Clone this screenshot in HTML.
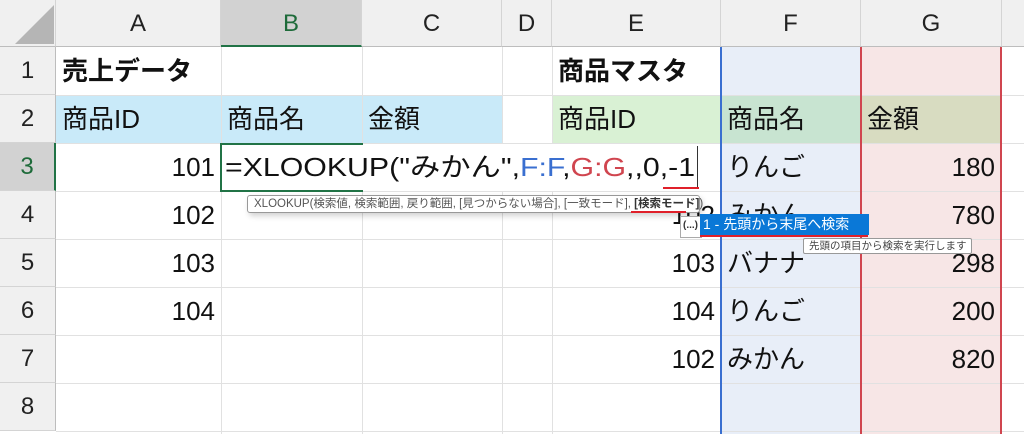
<!DOCTYPE html>
<html><head><meta charset="utf-8"><style>
*{margin:0;padding:0;box-sizing:border-box}
body{width:1024px;height:434px;overflow:hidden;background:#fff;font-family:"Liberation Sans","Noto Sans CJK JP",sans-serif;color:#111;position:relative}
.a{position:absolute}
.hl{position:absolute;height:1px;background:#e1e1e1}
.vl{position:absolute;width:1px;background:#e1e1e1}
.ch{position:absolute;top:0;height:47px;background:#f0f0f0;border-right:1px solid #d4d4d4;border-bottom:1px solid #bdbdbd;font-size:24px;text-align:center;line-height:47px;color:#222}
.rh{position:absolute;left:0;width:56px;height:48px;background:#f0f0f0;border-right:1px solid #bdbdbd;border-bottom:1px solid #d4d4d4;font-size:24px;text-align:center;line-height:48px;color:#222}
.t{position:absolute;font-size:26px;line-height:48px;white-space:nowrap}
.r{text-align:right}
</style></head><body>
<div class="a" style="left:56px;top:95px;width:446px;height:48px;background:#c9eaf9"></div>
<div class="a" style="left:721px;top:47px;width:140px;height:387px;background:#e8eef8"></div>
<div class="a" style="left:861px;top:47px;width:141px;height:387px;background:#f7e6e6"></div>
<div class="a" style="left:552px;top:95px;width:169px;height:48px;background:#d9f1d4"></div>
<div class="a" style="left:721px;top:95px;width:140px;height:48px;background:#c8e4d1"></div>
<div class="a" style="left:861px;top:95px;width:141px;height:48px;background:#d8dcc1"></div>
<div class="hl" style="left:56px;top:95px;width:968px"></div>
<div class="hl" style="left:56px;top:143px;width:968px"></div>
<div class="hl" style="left:56px;top:191px;width:968px"></div>
<div class="hl" style="left:56px;top:239px;width:968px"></div>
<div class="hl" style="left:56px;top:287px;width:968px"></div>
<div class="hl" style="left:56px;top:335px;width:968px"></div>
<div class="hl" style="left:56px;top:383px;width:968px"></div>
<div class="hl" style="left:56px;top:431px;width:968px"></div>
<div class="vl" style="left:221px;top:47px;height:387px"></div>
<div class="vl" style="left:362px;top:47px;height:387px"></div>
<div class="vl" style="left:502px;top:47px;height:387px"></div>
<div class="vl" style="left:552px;top:47px;height:387px"></div>
<div class="ch" style="left:0;width:56px"></div>
<svg class="a" style="left:12px;top:3px" width="44" height="42"><polygon points="42,2 42,41 3,41" fill="#b5b5b5"/></svg>
<div class="ch" style="left:56px;width:165px">A</div>
<div class="ch" style="left:221px;width:141px;background:#d2d2d2;color:#1e6b3a;border-bottom:2px solid #217346">B</div>
<div class="ch" style="left:362px;width:140px">C</div>
<div class="ch" style="left:502px;width:50px">D</div>
<div class="ch" style="left:552px;width:169px">E</div>
<div class="ch" style="left:721px;width:140px">F</div>
<div class="ch" style="left:861px;width:141px">G</div>
<div class="ch" style="left:1002px;width:30px"></div>
<div class="rh" style="top:47px">1</div>
<div class="rh" style="top:95px">2</div>
<div class="rh" style="top:143px;background:#d2d2d2;color:#1e6b3a;border-right:2px solid #217346">3</div>
<div class="rh" style="top:191px">4</div>
<div class="rh" style="top:239px">5</div>
<div class="rh" style="top:287px">6</div>
<div class="rh" style="top:335px">7</div>
<div class="rh" style="top:383px">8</div>
<div class="a" style="left:720px;top:47px;width:2px;height:387px;background:#3a6fd0"></div>
<div class="a" style="left:860px;top:47px;width:2px;height:387px;background:#d0454f"></div>
<div class="a" style="left:1000px;top:47px;width:2px;height:387px;background:#d0454f"></div>
<div class="t" style="left:62px;top:47px;font-weight:bold">売上データ</div>
<div class="t" style="left:558px;top:47px;font-weight:bold">商品マスタ</div>
<div class="t" style="left:62px;top:95px">商品ID</div>
<div class="t" style="left:227px;top:95px">商品名</div>
<div class="t" style="left:368px;top:95px">金額</div>
<div class="t" style="left:558px;top:95px">商品ID</div>
<div class="t" style="left:727px;top:95px">商品名</div>
<div class="t" style="left:867px;top:95px">金額</div>
<div class="t r" style="left:56px;width:159px;top:143px">101</div>
<div class="t r" style="left:56px;width:159px;top:191px">102</div>
<div class="t r" style="left:56px;width:159px;top:239px">103</div>
<div class="t r" style="left:56px;width:159px;top:287px">104</div>
<div class="t r" style="left:552px;width:163px;top:239px">103</div>
<div class="t r" style="left:552px;width:163px;top:287px">104</div>
<div class="t r" style="left:552px;width:163px;top:335px">102</div>
<div class="t r" style="left:552px;width:163px;top:191px">102</div>
<div class="t" style="left:727px;top:143px">りんご</div>
<div class="t" style="left:727px;top:191px">みかん</div>
<div class="t" style="left:727px;top:239px">バナナ</div>
<div class="t" style="left:727px;top:287px">りんご</div>
<div class="t" style="left:727px;top:335px">みかん</div>
<div class="t r" style="left:861px;width:134px;top:143px">180</div>
<div class="t r" style="left:861px;width:134px;top:191px">780</div>
<div class="t r" style="left:861px;width:134px;top:239px">298</div>
<div class="t r" style="left:861px;width:134px;top:287px">200</div>
<div class="t r" style="left:861px;width:134px;top:335px">820</div>
<div class="a" style="left:221px;top:144px;width:478px;height:47px;background:#fff"></div>
<div class="a" style="left:220px;top:143px;width:143px;height:2px;background:#217346"></div>
<div class="a" style="left:220px;top:143px;width:2px;height:49px;background:#217346"></div>
<div class="a" style="left:220px;top:190px;width:143px;height:2px;background:#217346"></div>
<div class="a" style="left:697px;top:146px;width:1px;height:42px;background:#333"></div>
<div class="t" style="left:225px;top:143px;transform:scaleX(1.165);transform-origin:0 0">=XLOOKUP("みかん",<span style="color:#3a6fd0">F:F</span>,<span style="color:#d0454f">G:G</span>,,0,-1</div>
<div class="a" style="left:663px;top:187px;width:36px;height:2px;background:#e0202a"></div>
<div class="a" style="left:247px;top:195px;width:453px;height:18px;background:#fff;border:1px solid #999;border-radius:3px;box-shadow:2px 3px 6px rgba(0,0,0,.18);font-size:11.5px;line-height:16px;color:#555;padding-left:6px;white-space:nowrap">XLOOKUP(検索値, 検索範囲, 戻り範囲, [見つからない場合], [一致モード], <b style="color:#333">[検索モード]</b>)</div>
<div class="a" style="left:631px;top:211px;width:55px;height:2px;background:#e0202a"></div>
<div class="a" style="left:680px;top:216px;width:22px;height:22px;background:#fff;border:1px solid #aaa;font-size:10px;line-height:18px;padding-left:2px;font-weight:bold;color:#333">(...)</div>
<div class="a" style="left:700px;top:214px;width:169px;height:21px;background:#0a78d7;color:#fff;font-size:14px;line-height:21px;padding-left:3px;white-space:nowrap">1 - 先頭から末尾へ検索</div>
<div class="a" style="left:700px;top:235px;width:168px;height:2px;background:#e0202a"></div>
<div class="a" style="left:803px;top:238px;width:169px;height:16px;background:#fff;border:1px solid #999;border-radius:2px;font-size:10.5px;line-height:14px;color:#444;padding-left:5px;white-space:nowrap;overflow:hidden">先頭の項目から検索を実行します</div>
</body></html>
